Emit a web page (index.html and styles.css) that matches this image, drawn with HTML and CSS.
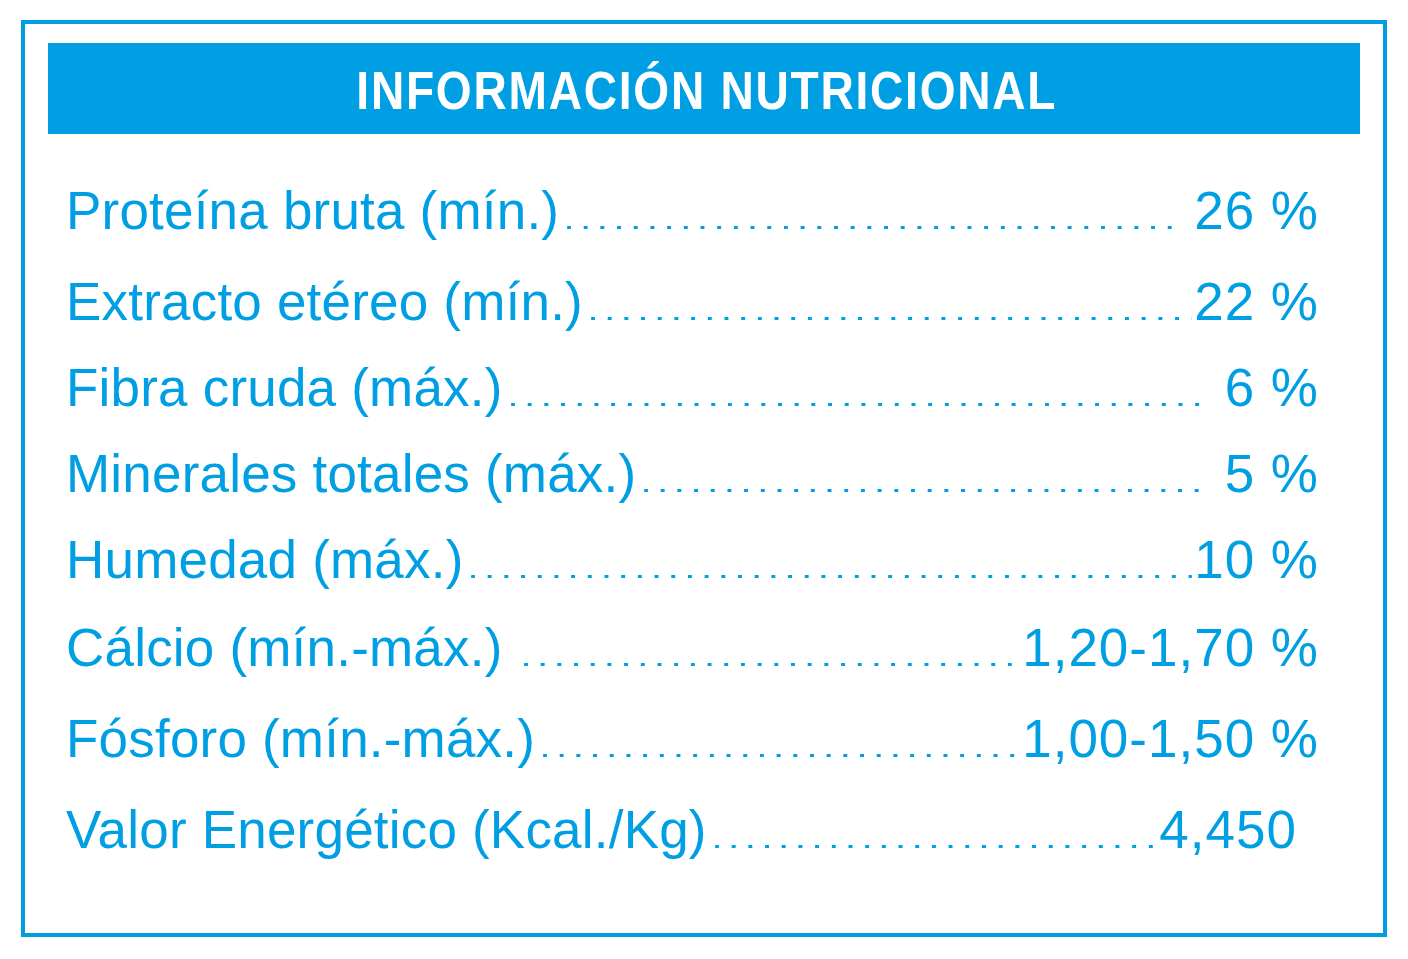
FILE: index.html
```html
<!DOCTYPE html>
<html lang="es">
<head>
<meta charset="utf-8">
<title>Información nutricional</title>
<link rel="stylesheet" href="styles.css">
</head>
<body>
<section class="card">
  <h1 class="card-title"><span class="card-title-text">INFORMACIÓN NUTRICIONAL</span></h1>
  <ul class="facts">
    <li class="fact"><span class="label">Proteína bruta (mín.)</span><span class="leader lead-gap"></span><span class="value">26 %</span></li>
    <li class="fact fact-tall"><span class="label">Extracto etéreo (mín.)</span><span class="leader"></span><span class="value">22 %</span></li>
    <li class="fact fact-short"><span class="label">Fibra cruda (máx.)</span><span class="leader lead-gap"></span><span class="value">6 %</span></li>
    <li class="fact fact-short"><span class="label">Minerales totales (máx.)</span><span class="leader lead-gap"></span><span class="value">5 %</span></li>
    <li class="fact fact-short"><span class="label">Humedad (máx.)</span><span class="leader"></span><span class="value">10 %</span></li>
    <li class="fact"><span class="label">Cálcio (mín.-máx.)</span><span class="leader lead-wide"></span><span class="value">1,20-1,70 %</span></li>
    <li class="fact fact-tall"><span class="label">Fósforo (mín.-máx.)</span><span class="leader"></span><span class="value">1,00-1,50 %</span></li>
    <li class="fact fact-tall"><span class="label">Valor Energético (Kcal./Kg)</span><span class="leader"></span><span class="value value-plain">4,450</span></li>
  </ul>
</section>
</body>
</html>
```
FILE: styles.css
```css
* { box-sizing: border-box; }

html, body {
  margin: 0;
  padding: 0;
  background: #ffffff;
}

body {
  width: 1408px;
  height: 959px;
  padding: 20px 0 0 21px;
  font-family: "Liberation Sans", Arial, sans-serif;
  color: #009fe3;
}

.card {
  width: 1366px;
  height: 917px;
  border: 4px solid #009fe3;
  padding: 19px 23px 0;
}

.card-title {
  margin: 0;
  height: 91px;
  background: #009fe3;
  color: #ffffff;
  display: flex;
  align-items: center;
  justify-content: center;
  font-weight: 700;
  font-size: 53px;
  line-height: 1;
  padding: 4px 0 0 6px;
}

.card-title-text {
  display: inline-block;
  letter-spacing: 2px;
  transform: scaleX(0.87);
}

.facts {
  list-style: none;
  margin: 0;
  padding: 33px 42px 0 18px;
}

.fact {
  display: flex;
  align-items: baseline;
  font-size: 53px;
  line-height: 88px;
  white-space: nowrap;
}

.fact-tall { margin-top: 3px; }
.fact-short { margin-top: -2px; }

.label {
  flex: none;
  letter-spacing: 0.2px;
}

.leader {
  flex: 1;
  height: 3px;
  margin: 0 2px 0 8px;
  background-image: linear-gradient(to right, #009fe3 0, #009fe3 4px, transparent 4px);
  background-size: 16.7px 3px;
  background-repeat: repeat-x;
  border-radius: 1px;
}

.lead-gap { margin-right: 20px; }
.lead-wide { margin-left: 22px; margin-right: 10px; }

.value {
  flex: none;
  letter-spacing: 1px;
  margin-right: -1px;
}

.value-plain { margin-right: 21px; }
```
